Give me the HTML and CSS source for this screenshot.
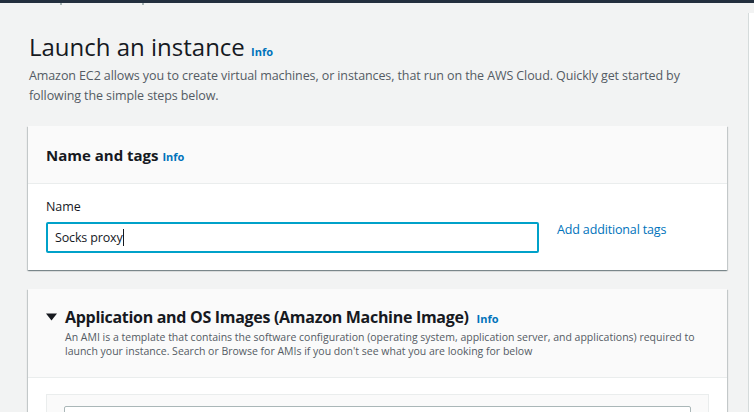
FILE: index.html
```html
<!DOCTYPE html>
<html lang="en">
<head>
<meta charset="utf-8">
<title>Launch an instance</title>
<link rel="stylesheet" href="styles.css">
</head>
<body>
<div class="topbar"><span class="mark m1"></span><span class="mark m2"></span></div>
<div class="layout">
  <main class="main">
    <header class="page-head">
      <h1 class="title">Launch an instance <a class="info info-lg" href="#">Info</a></h1>
      <p class="intro">Amazon EC2 allows you to create virtual machines, or instances, that run on the AWS Cloud. Quickly get started by following the simple steps below.</p>
    </header>

    <section class="card">
      <div class="card-head">
        <h2 class="card-title">Name and tags <a class="info" href="#">Info</a></h2>
      </div>
      <div class="card-body name-body">
        <div class="field">
          <label class="label" for="name">Name</label>
          <div class="input focused"><span class="value">Socks proxy</span><span class="caret"></span></div>
        </div>
        <a class="link" href="#">Add additional tags</a>
      </div>
    </section>

    <section class="card">
      <div class="card-head ami-head">
        <div class="ami-title-row">
          <svg class="toggle" width="11" height="8" viewBox="0 0 11 8"><path d="M0 0.5 H11 L5.5 7.5 Z" fill="#16191f"/></svg>
          <h2 class="card-title big">Application and OS Images (Amazon Machine Image) <a class="info" href="#">Info</a></h2>
        </div>
        <p class="desc">An AMI is a template that contains the software configuration (operating system, application server, and applications) required to launch your instance. Search or Browse for AMIs if you don't see what you are looking for below</p>
      </div>
      <div class="card-body ami-body">
        <div class="inner">
          <div class="search"></div>
        </div>
      </div>
    </section>
  </main>
  <aside class="side"></aside>
</div>
</body>
</html>
```

FILE: styles.css
```css
* { box-sizing: border-box; }
html, body { margin: 0; padding: 0; }
body {
  background: #f2f3f3;
  font-family: "Open Sans", "Noto Sans", Arial, sans-serif;
  color: #16191f;
  width: 754px;
  height: 412px;
  overflow: hidden;
}
.topbar {
  height: 3px;
  background: #232f3e;
  position: relative;
}
.mark {
  position: absolute;
  top: 3px;
  width: 2px;
  height: 2px;
  background: #aab7b8;
}
.m1 { left: 60px; }
.m2 { left: 142px; }
.layout {
  display: flex;
  align-items: flex-start;
}
.main {
  flex: 1;
  padding: 0 21px 0 28px;
}
.side {
  width: 6px;
  margin-top: 10px;
  height: 420px;
  background: #ffffff;
  border-left: 1px solid #d5dbdb;
}
.page-head {
  padding-top: 30px;
  margin-bottom: 20px;
}
.title {
  margin: 0;
  font-size: 24px;
  font-weight: 400;
  line-height: 28px;
  padding-left: 1px;
}
.info {
  color: #0073bb;
  font-size: 11px;
  font-weight: 700;
  text-decoration: none;
  letter-spacing: 0;
}
.intro {
  margin: 0;
  font-size: 12.5px;
  letter-spacing: -0.1px;
  line-height: 20px;
  color: #545b64;
  padding-left: 1px;
}
.card {
  background: #ffffff;
  box-shadow: 0 1px 1px 0 rgba(0, 28, 36, 0.3), 1px 1px 1px 0 rgba(0, 28, 36, 0.15), -1px 1px 1px 0 rgba(0, 28, 36, 0.15);
  margin-bottom: 19px;
}
.card-head {
  background: #fafafa;
  border-bottom: 1px solid #eaeded;
  height: 58px;
  padding: 0 18px;
  display: flex;
  align-items: center;
}
.card-title {
  margin: 0;
  font-size: 15px;
  font-weight: 700;
  letter-spacing: 0;
}
.name-body {
  padding: 14px 18px 17px;
  display: flex;
  align-items: flex-end;
  gap: 18px;
}
.field { width: 493px; }
.label {
  display: block;
  font-size: 12.5px;
  letter-spacing: -0.1px;
  line-height: 18px;
  color: #16191f;
  margin-bottom: 6px;
}
.input {
  height: 31px;
  border: 2px solid #00a1c9;
  border-radius: 2px;
  display: flex;
  align-items: center;
  padding-left: 7px;
  font-size: 12.5px;
  letter-spacing: -0.15px;
  color: #16191f;
}
.caret {
  width: 1px;
  height: 17px;
  background: #16191f;
}
.link {
  color: #0073bb;
  font-size: 12.5px;
  letter-spacing: -0.15px;
  text-decoration: none;
  line-height: 18px;
  margin-bottom: 14px;
}
.ami-head {
  height: auto;
  display: block;
  padding: 17px 18px 19px;
}
.ami-title-row {
  display: flex;
  align-items: center;
  gap: 8px;
}
.toggle { flex: none; }
.card-title.big {
  font-size: 16px;
  letter-spacing: -0.3px;
}
.card-title.big .info { margin-left: 4px; }
.desc {
  margin: 2px 0 0 19px;
  font-size: 10.5px;
  line-height: 14px;
  color: #545b64;
}
.ami-body {
  padding: 16px 18px 0;
}
.inner {
  background: #fafafa;
  border: 1px solid #eaeded;
  padding: 11px 17px 0;
  height: 60px;
}
.search {
  height: 40px;
  background: #ffffff;
  border: 1px solid #aab7b8;
  border-radius: 2px;
}
```
